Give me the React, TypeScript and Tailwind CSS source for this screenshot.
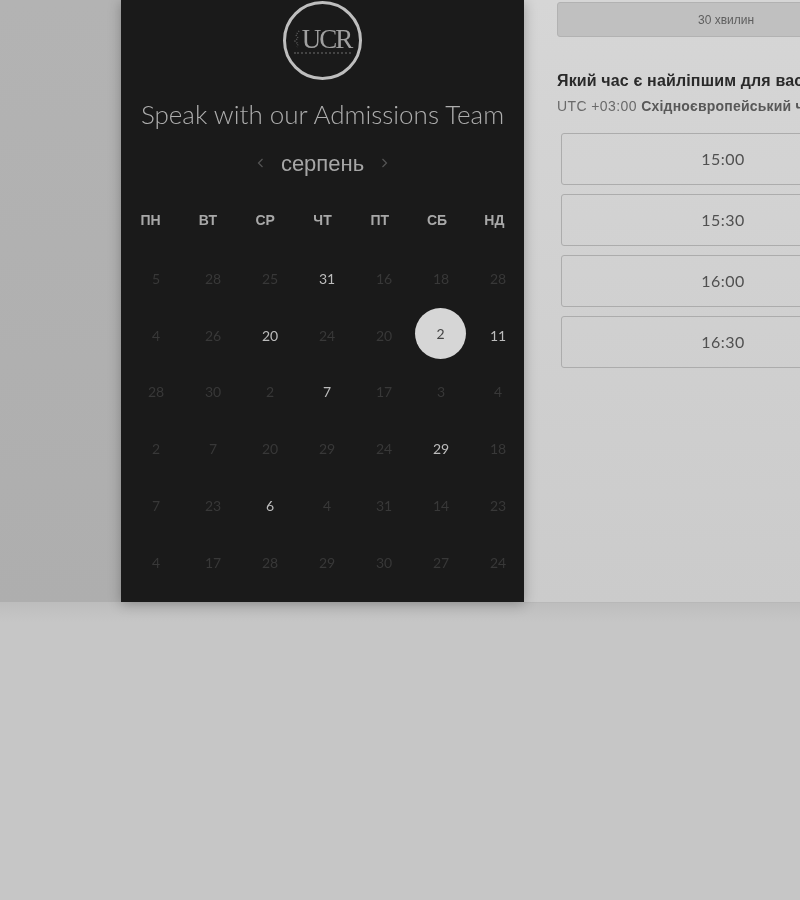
const sans = "font-['Liberation_Sans',Arial,sans-serif]";

const days = ["ПН", "ВТ", "СР", "ЧТ", "ПТ", "СБ", "НД"];

// bright = day you can book, sel = picked day
const weeks: { n: number; on?: boolean; sel?: boolean }[][] = [
  [{ n: 5 }, { n: 28 }, { n: 25 }, { n: 31, on: true }, { n: 16 }, { n: 18 }, { n: 28 }],
  [{ n: 4 }, { n: 26 }, { n: 20, on: true }, { n: 24 }, { n: 20 }, { n: 2, sel: true }, { n: 11, on: true }],
  [{ n: 28 }, { n: 30 }, { n: 2 }, { n: 7, on: true }, { n: 17 }, { n: 3 }, { n: 4 }],
  [{ n: 2 }, { n: 7 }, { n: 20 }, { n: 29 }, { n: 24 }, { n: 29, on: true }, { n: 18 }],
  [{ n: 7 }, { n: 23 }, { n: 6, on: true }, { n: 4 }, { n: 31 }, { n: 14 }, { n: 23 }],
  [{ n: 4 }, { n: 17 }, { n: 28 }, { n: 29 }, { n: 30 }, { n: 27 }, { n: 24 }],
];

const times = ["15:00", "15:30", "16:00", "16:30"];

function Logo() {
  return (
    <div className="w-[79px] h-[79px] rounded-full border-[3px] border-[#bebebe] flex flex-col items-center justify-center">
      <div className="flex items-center mt-[1px]">
        {/* little crest left of the letters */}
        <svg width="7" height="18" viewBox="0 0 7 18" className="mr-px">
          <path d="M5 1 L2 5 L4 8 L1 11 L4 14 L3 17" fill="none" stroke="#5a5a5a" strokeWidth="1.5" strokeDasharray="1 1.5" />
        </svg>
        <div className="font-['Liberation_Serif',serif] text-[27px] leading-[22px] tracking-[-2px] text-[#a0a0a0]">UCR</div>
      </div>
      <div className="w-[57px] h-[2px] mt-[2px] border-t-2 border-dotted border-[#444]" />
    </div>
  );
}

function Chevron({ flip }: { flip?: boolean }) {
  return (
    <svg width="7" height="10" viewBox="0 0 7 10" className={flip ? "rotate-180" : ""}>
      <path d="M5.5 1 L1.5 5 L5.5 9" fill="none" stroke="#555" strokeWidth="1.2" />
    </svg>
  );
}

function Calendar() {
  return (
    <div className="w-[403px] h-[602px] shrink-0 bg-[#1a1a1a] flex flex-col items-center pt-px shadow-[0_2px_12px_rgba(0,0,0,0.28)] relative">
      <Logo />
      <h1 className="mt-[16px] font-['Lato',sans-serif] font-light text-[26px] leading-[36px] text-[#aeaeae] whitespace-nowrap">
        Speak with our Admissions Team
      </h1>
      <div className={`mt-[14px] h-[34px] flex items-center gap-[16px] ${sans}`}>
        <Chevron />
        <span className="text-[22px] text-[#a6a6a6] px-[1px]">серпень</span>
        <Chevron flip />
      </div>
      <div className={`mt-[30px] w-full grid grid-cols-7 px-[1px] ${sans}`}>
        {days.map((d) => (
          <div key={d} className="text-center text-[14px] leading-[20px] font-bold text-[#a8a8a8]">{d}</div>
        ))}
      </div>
      <div className="mt-[20px] w-full pl-[6.5px] font-['Lato',sans-serif] text-[14px]">
        {weeks.map((w, i) => (
          <div key={i} className="grid grid-cols-[repeat(7,57px)] h-[56.8px] items-center">
            {w.map((c, j) =>
              c.sel ? (
                <div key={j} className="flex justify-center pr-[1px]">
                  <div className="w-[51px] h-[51px] shrink-0 rounded-full bg-[#d6d6d6] text-[#444] flex items-center justify-center -mt-[4px]">{c.n}</div>
                </div>
              ) : (
                <div key={j} className={`text-center ${c.on ? "text-[#bcbcbc]" : "text-[#383838]"}`}>{c.n}</div>
              )
            )}
          </div>
        ))}
      </div>
    </div>
  );
}

function Slots() {
  return (
    <div className={`w-[276px] h-[603px] shrink-0 overflow-hidden bg-gradient-to-b from-[#d6d6d6] to-[#cbcbcb] border-b border-[#b8b8b8] pt-[2px] pl-[33px] ${sans}`}>
      <div className="w-[338px]">
        <div className="h-[35px] rounded-[3px] border border-[#b2b2b2] bg-[#c0c0c0] text-[12px] text-[#5e5e5e] flex items-center justify-center">30 хвилин</div>
        <div className="mt-[33px] text-[16px] leading-[22px] tracking-[0.15px] font-bold text-[#2a2a2a] whitespace-nowrap">Який час є найліпшим для вас?</div>
        <div className="mt-[4px] text-[14px] leading-[20px] tracking-[0.4px] text-[#6a6a6a] whitespace-nowrap">
          UTC +03:00 <b className="text-[#585858] tracking-[0.2px]">Східноєвропейський час</b>
        </div>
        <div className="mt-[17px] ml-[4px] w-[324px] flex flex-col gap-[9px] font-['Lato',sans-serif]">
          {times.map((t) => (
            <div key={t} className="h-[52px] rounded-[3px] border border-[#acacac] flex items-center justify-center text-[16px] tracking-[0.5px] text-[#505050]">{t}</div>
          ))}
        </div>
      </div>
    </div>
  );
}

export default function App() {
  return (
    <div className="w-[800px] h-[900px] overflow-hidden bg-[#c6c6c6] grayscale">
      <div className="h-[602px] flex bg-gradient-to-b from-[#b3b3b3] to-[#aeaeae]">
        <div className="w-[121px] shrink-0" />
        <Calendar />
        <Slots />
      </div>
      <div className="h-[20px] bg-gradient-to-b from-[#bdbdbd] to-[#c6c6c6]" />
    </div>
  );
}
